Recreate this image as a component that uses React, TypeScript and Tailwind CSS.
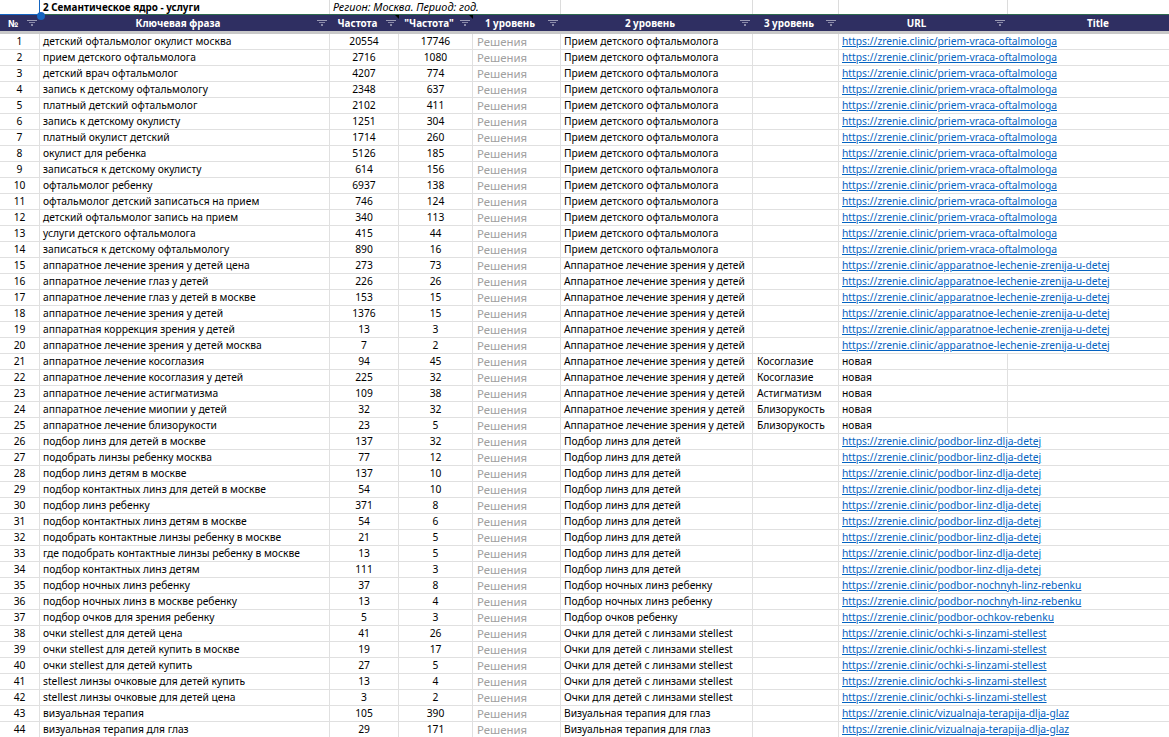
const P1 = "Прием детского офтальмолога"
const P2 = "Аппаратное лечение зрения у детей"
const P3 = "Подбор линз для детей"
const P4 = "Подбор ночных линз ребенку"
const P6 = "Очки для детей с линзами stellest"
const P7 = "Визуальная терапия для глаз"
const U1 = "https://zrenie.clinic/priem-vraca-oftalmologa"
const U2 = "https://zrenie.clinic/apparatnoe-lechenie-zrenija-u-detej"
const U3 = "https://zrenie.clinic/podbor-linz-dlja-detej"
const U4 = "https://zrenie.clinic/podbor-nochnyh-linz-rebenku"
const U5 = "https://zrenie.clinic/podbor-ochkov-rebenku"
const U6 = "https://zrenie.clinic/ochki-s-linzami-stellest"
const U7 = "https://zrenie.clinic/vizualnaja-terapija-dlja-glaz"

type Row = [string, number, number, string, string, string]

const rows: Row[] = [
  ["детский офтальмолог окулист москва", 20554, 17746, P1, "", U1],
  ["прием детского офтальмолога", 2716, 1080, P1, "", U1],
  ["детский врач офтальмолог", 4207, 774, P1, "", U1],
  ["запись к детскому офтальмологу", 2348, 637, P1, "", U1],
  ["платный детский офтальмолог", 2102, 411, P1, "", U1],
  ["запись к детскому окулисту", 1251, 304, P1, "", U1],
  ["платный окулист детский", 1714, 260, P1, "", U1],
  ["окулист для ребенка", 5126, 185, P1, "", U1],
  ["записаться к детскому окулисту", 614, 156, P1, "", U1],
  ["офтальмолог ребенку", 6937, 138, P1, "", U1],
  ["офтальмолог детский записаться на прием", 746, 124, P1, "", U1],
  ["детский офтальмолог запись на прием", 340, 113, P1, "", U1],
  ["услуги детского офтальмолога", 415, 44, P1, "", U1],
  ["записаться к детскому офтальмологу", 890, 16, P1, "", U1],
  ["аппаратное лечение зрения у детей цена", 273, 73, P2, "", U2],
  ["аппаратное лечение глаз у детей", 226, 26, P2, "", U2],
  ["аппаратное лечение глаз у детей в москве", 153, 15, P2, "", U2],
  ["аппаратное лечение зрения у детей", 1376, 15, P2, "", U2],
  ["аппаратная коррекция зрения у детей", 13, 3, P2, "", U2],
  ["аппаратное лечение зрения у детей москва", 7, 2, P2, "", U2],
  ["аппаратное лечение косоглазия", 94, 45, P2, "Косоглазие", "новая"],
  ["аппаратное лечение косоглазия у детей", 225, 32, P2, "Косоглазие", "новая"],
  ["аппаратное лечение астигматизма", 109, 38, P2, "Астигматизм", "новая"],
  ["аппаратное лечение миопии у детей", 32, 32, P2, "Близорукость", "новая"],
  ["аппаратное лечение близорукости", 23, 5, P2, "Близорукость", "новая"],
  ["подбор линз для детей в москве", 137, 32, P3, "", U3],
  ["подобрать линзы ребенку москва", 77, 12, P3, "", U3],
  ["подбор линз детям в москве", 137, 10, P3, "", U3],
  ["подбор контактных линз для детей в москве", 54, 10, P3, "", U3],
  ["подбор линз ребенку", 371, 8, P3, "", U3],
  ["подбор контактных линз детям в москве", 54, 6, P3, "", U3],
  ["подобрать контактные линзы ребенку в москве", 21, 5, P3, "", U3],
  ["где подобрать контактные линзы ребенку в москве", 13, 5, P3, "", U3],
  ["подбор контактных линз детям", 111, 3, P3, "", U3],
  ["подбор ночных линз ребенку", 37, 8, P4, "", U4],
  ["подбор ночных линз в москве ребенку", 13, 4, P4, "", U4],
  ["подбор очков для зрения ребенку", 5, 3, "Подбор очков ребенку", "", U5],
  ["очки stellest для детей цена", 41, 26, P6, "", U6],
  ["очки stellest для детей купить в москве", 19, 17, P6, "", U6],
  ["очки stellest для детей купить", 27, 5, P6, "", U6],
  ["stellest линзы очковые для детей купить", 13, 4, P6, "", U6],
  ["stellest линзы очковые для детей цена", 3, 2, P6, "", U6],
  ["визуальная терапия", 105, 390, P7, "", U7],
  ["визуальная терапия для глаз", 29, 171, P7, "", U7],
]

function FilterIcon() {
  return (
    <svg width="10" height="6" viewBox="0 0 10 6" className="absolute right-[3px] top-[5px]">
      <rect x="0" y="0" width="10" height="1" fill="#9a9ab4" />
      <rect x="2" y="2" width="6" height="1" fill="#8a8aa8" />
      <rect x="4" y="4" width="2" height="2" fill="#8a8aa8" />
    </svg>
  )
}

function Corner() {
  return (
    <svg width="4" height="4" viewBox="0 0 4 4" className="absolute right-0 top-0">
      <polygon points="0,0 4,0 4,4" fill="#000" />
    </svg>
  )
}

function Head({ label, filter = true, corner = false, className = "pr-[14px]" }: { label: string; filter?: boolean; corner?: boolean; className?: string }) {
  return (
    <div className={`relative flex items-center justify-center font-bold text-white ${className}`}>
      <span>{label}</span>
      {filter && <FilterIcon />}
      {corner && <Corner />}
    </div>
  )
}

export default function App() {
  return (
    <div className="h-[737px] w-[1169px] overflow-hidden bg-white font-['Noto_Sans',sans-serif] text-[10.27px] leading-[15px] text-black">
      {/* title row */}
      <div className="grid h-[14px] grid-cols-[40px_290px_231px_192px_86px_169px_161px] leading-[14px]">
        <div className="border-r border-r-[#1565c0]" />
        <div className="border-r border-r-[#dcdcdc] pl-[3px] text-[9.9px] font-bold">2 Семантическое ядро - услуги</div>
        <div className="whitespace-nowrap border-r border-r-[#dcdcdc] pl-[3px] text-[10.9px] italic">Регион: Москва. Период: год.</div>
        <div className="border-r border-r-[#dcdcdc]" />
        <div className="border-r border-r-[#dcdcdc]" />
        <div className="border-r border-r-[#dcdcdc]" />
        <div />
      </div>

      {/* header */}
      <div className="relative grid h-[20px] grid-cols-[40px_290px_69px_74px_88px_192px_86px_169px_161px] border-t border-t-[#2f6b4f] border-b-[3px] border-b-[#c8c8c8] bg-[#2f2f62] text-[9.9px]">
        <Head label="№" />
        <Head label="Ключевая фраза" />
        <Head label="Частота" corner />
        <Head label={'"Частота"'} corner />
        <Head label="1 уровень" />
        <Head label="2 уровень" />
        <Head label="3 уровень" />
        <Head label="URL" />
        <Head label="Title" filter={false} className="pl-[19px]" />
        {/* selection outline over the cell above */}
        <div className="absolute left-0 top-[-1px] h-px w-[40px] bg-[#1565c0]" />
        <div className="absolute left-[37px] top-[-3px] h-[8px] w-[8px] rounded-full bg-[#1565c0]" />
      </div>

      {/* body */}
      {rows.map((r, i) => {
        const isLink = r[5] !== "новая"
        return (
          <div key={i} className="grid h-[16px] grid-cols-[40px_290px_69px_74px_88px_192px_86px_169px_161px] whitespace-nowrap border-b border-b-[#e0e0e0]">
            <div className="border-r border-r-[#e0e0e0] text-center">{i + 1}</div>
            <div className="border-r border-r-[#e0e0e0] pl-[3px]">{r[0]}</div>
            <div className="border-r border-r-[#e0e0e0] text-center">{r[1]}</div>
            <div className="border-r border-r-[#e0e0e0] text-center">{r[2]}</div>
            <div className="border-r border-r-[#e0e0e0] pl-[4px] text-[11.4px] text-[#a0a0a0]">Решения</div>
            <div className="border-r border-r-[#e0e0e0] pl-[3px]">{r[3]}</div>
            <div className="border-r border-r-[#e0e0e0] pl-[4px]">{r[4]}</div>
            {isLink ? (
              <div className="col-span-2 pl-[3px]">
                <a href={r[5]} className="text-[#0563c1] underline">{r[5]}</a>
              </div>
            ) : (
              <>
                <div className="border-r border-r-[#e0e0e0] pl-[3px]">{r[5]}</div>
                <div />
              </>
            )}
          </div>
        )
      })}
    </div>
  )
}
